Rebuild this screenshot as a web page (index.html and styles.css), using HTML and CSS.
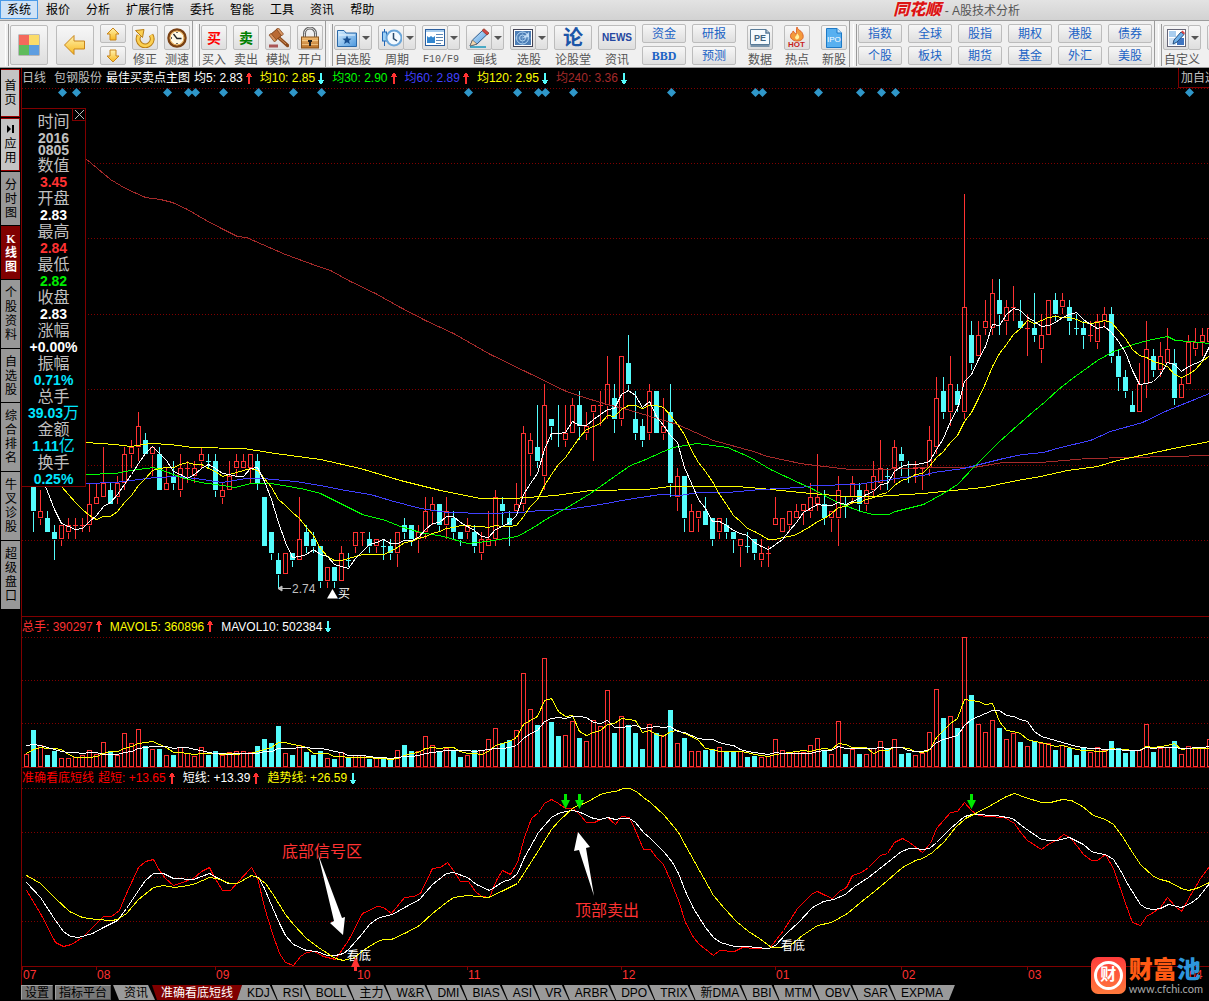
FILE: index.html
```html
<!DOCTYPE html>
<html lang="zh-CN">

<head>
    <meta charset="UTF-8">
    <meta name="viewport" content="width=device-width, initial-scale=1.0">
    <title>同花顺 - A股技术分析</title>
    <link rel="stylesheet" href="styles.css">
</head>

<body>
    <!-- shared shapes -->
    <svg class="defs" aria-hidden="true">
        <defs>
            <linearGradient id="gold" x1="0" y1="0" x2="0" y2="1">
                <stop offset="0" stop-color="#fff3b0"/>
                <stop offset="1" stop-color="#f7b71d"/>
            </linearGradient>
            <linearGradient id="sky" x1="0" y1="0" x2="1" y2="1">
                <stop offset="0" stop-color="#d8efff"/>
                <stop offset="1" stop-color="#4b97dd"/>
            </linearGradient>
            <linearGradient id="wood" x1="0" y1="0" x2="0" y2="1">
                <stop offset="0" stop-color="#f3bd72"/>
                <stop offset="1" stop-color="#b8712a"/>
            </linearGradient>
            <symbol id="up" viewBox="0 0 6 11"><path fill="#ff3232" d="M2 0H4V1H5V3H6V4H4V11H2V4H0V3H1V1H2z"/></symbol>
            <symbol id="down" viewBox="0 0 6 11"><path fill="#54fcfc" d="M2 11H4V10H5V8H6V7H4V0H2V7H0V8H1V10H2z"/></symbol>
        </defs>
    </svg>

    <header>
        <nav class="menu">
            <a class="menu-item active" href="#">系统</a>
            <a class="menu-item" href="#">报价</a>
            <a class="menu-item" href="#">分析</a>
            <a class="menu-item" href="#">扩展行情</a>
            <a class="menu-item" href="#">委托</a>
            <a class="menu-item" href="#">智能</a>
            <a class="menu-item" href="#">工具</a>
            <a class="menu-item" href="#">资讯</a>
            <a class="menu-item" href="#">帮助</a>
            <h1 class="title"><span class="brand">同花顺</span> - A股技术分析</h1>
        </nav>

        <div class="toolbar">
            <div class="group home">
                <button class="btn big" aria-label="主页">
                    <svg width="22" height="22" viewBox="0 0 22 22">
                        <rect x="0.5" y="0.5" width="21" height="21" fill="#888"/>
                        <rect x="1" y="1" width="10" height="10" fill="#f4695c"/>
                        <rect x="11" y="1" width="10" height="10" fill="#fbdc6a"/>
                        <rect x="1" y="11" width="10" height="10" fill="#5fbb5c"/>
                        <rect x="11" y="11" width="10" height="10" fill="#5d9de0"/>
                    </svg>
                </button>
                <button class="btn big back" aria-label="后退">
                    <svg width="24" height="22" viewBox="0 0 24 22"><path d="M1.500 11L11 1.500V7H21.500V15H11V20.500z" fill="url(#gold)" stroke="#c8841a"/></svg>
                </button>
                <div class="stack small">
                    <button class="btn" aria-label="上"><svg width="14" height="14" viewBox="0 0 14 14"><path d="M7 1L13 7H10V13H4V7H1z" fill="url(#gold)" stroke="#c8841a"/></svg></button>
                    <button class="btn" aria-label="下"><svg width="14" height="14" viewBox="0 0 14 14"><path d="M7 13L13 7H10V1H4V7H1z" fill="url(#gold)" stroke="#c8841a"/></svg></button>
                </div>
                <div class="tool">
                    <button class="btn" id="fix"><svg width="20" height="20" viewBox="0 0 20 20"><path d="M4 7.500A7 7 0 1 0 16 7" fill="none" stroke="#b87d16" stroke-width="5"/><path d="M4 7.500A7 7 0 1 0 16 7" fill="none" stroke="#fbd052" stroke-width="3"/><path d="M0.500 2.500L9 1.500L7.500 9.500z" fill="#fbd052" stroke="#b87d16"/></svg></button>
                    <label for="fix">修正</label>
                </div>
                <div class="tool">
                    <button class="btn" id="speed"><svg width="20" height="20" viewBox="0 0 20 20"><circle cx="10" cy="10" r="8.500" fill="#fff9e6" stroke="#7a4113" stroke-width="2.500"/><circle cx="10" cy="10" r="7" fill="none" stroke="#dd9a3c"/><path d="M6.500 6L10 10.500H14.500M10 4V5M10 15V16M4 10H5" fill="none" stroke="#222" stroke-width="1.300"/></svg></button>
                    <label for="speed">测速</label>
                </div>
            </div>

            <div class="group">
                <div class="tool"><button class="btn buy" id="buy">买</button><label for="buy">买入</label></div>
                <div class="tool"><button class="btn sell" id="sell">卖</button><label for="sell">卖出</label></div>
                <div class="tool">
                    <button class="btn" id="sim"><svg width="21" height="20" viewBox="0 0 21 20"><path d="M10 9L19.500 17.500" stroke="#8b4a1c" stroke-width="3.500" stroke-linecap="round"/><path d="M9 8L18 16" stroke="#d2915a" stroke-width="1"/><path d="M2 7L9 1L14 7L7 13z" fill="#b96a34" stroke="#7b3f18"/><path d="M1 7L3 5.500L8.500 12L6.500 14zM8.500 1L10.500 0L15.500 6L13.500 8z" fill="#d99662" stroke="#7b3f18" stroke-width="0.700"/><path d="M1 18H10" stroke="#a55" stroke-width="3"/></svg></button>
                    <label for="sim">模拟</label>
                </div>
                <div class="tool">
                    <button class="btn" id="open"><svg width="20" height="22" viewBox="0 0 20 22"><path d="M4.500 11V6.500A5.500 5.500 0 0 1 15.500 6.500V11" fill="none" stroke="#666" stroke-width="3"/><path d="M4.500 11V6.500A5.500 5.500 0 0 1 15.500 6.500V11" fill="none" stroke="#ddd"/><rect x="1.500" y="10" width="17" height="11" fill="url(#wood)" stroke="#8a551d"/><path d="M2 13.500H18M2 17.500H18" stroke="#ffe0a8" opacity=".6"/><path d="M8 13H12V15H11V19H9V15H8z" fill="#222"/></svg></button>
                    <label for="open">开户</label>
                </div>
            </div>

            <div class="group">
                <div class="tool">
                    <div class="split"><button class="btn" id="fav"><svg width="20" height="18" viewBox="0 0 20 18"><path d="M0.500 1.500H7L9 4H19.500V17.500H0.500z" fill="url(#sky)" stroke="#2b69a8"/><path d="M2 6H18" stroke="#eaf6ff"/><path d="M10 6.500L11.300 9.500L14.500 9.700L12 11.800L12.900 15L10 13.200L7.100 15L8 11.800L5.500 9.700L8.700 9.500z" fill="#174f91"/></svg></button><button class="btn arrow" aria-label="更多"></button></div>
                    <label for="fav">自选股</label>
                </div>
                <div class="tool">
                    <div class="split"><button class="btn" id="period"><svg width="21" height="20" viewBox="0 0 21 20"><path d="M3.500 1V18" stroke="#2267b5"/><rect x="1.500" y="4" width="4" height="9" fill="#9dd0f6" stroke="#2267b5"/><circle cx="13" cy="10" r="7.500" fill="#f3faff" stroke="#6aa6da" stroke-width="2"/><path d="M12.500 5V10.500L16 13" fill="none" stroke="#2a4b6d" stroke-width="1.500"/></svg></button><button class="btn arrow" aria-label="更多"></button></div>
                    <label for="period">周期</label>
                </div>
                <div class="tool">
                    <div class="split"><button class="btn" id="f10"><svg width="20" height="17" viewBox="0 0 20 17"><rect x="0.500" y="0.500" width="19" height="16" fill="#fff" stroke="#2c5f9e"/><rect x="1" y="1" width="18" height="2" fill="#a9cdee"/><path d="M2 7L4 8.500L6 7L8 8.500L10 7V14H2z" fill="#3286cf"/><path d="M11 5.500H18M11 8.500H18M11 11.500H18M11 14.500H16" stroke="#5c87b5"/></svg></button><button class="btn arrow" aria-label="更多"></button></div>
                    <label class="mono" for="f10">F10/F9</label>
                </div>
                <div class="tool">
                    <div class="split"><button class="btn" id="draw"><svg width="21" height="20" viewBox="0 0 21 20"><path d="M1 19H17" stroke="#1797bd" stroke-width="1.500"/><path d="M1 18L3.500 12L14 2L18.500 6L8 16z" fill="url(#sky)" stroke="#2f5c8e"/><path d="M13 2.500L15 0.800L20 5.200L18 7z" fill="#d64141" stroke="#943"/><path d="M1 18L3.500 12L8 16z" fill="#f4d8ae" stroke="#555" stroke-width=".6"/></svg></button><button class="btn arrow" aria-label="更多"></button></div>
                    <label for="draw">画线</label>
                </div>
                <div class="tool">
                    <div class="split"><button class="btn" id="pick"><svg width="20" height="18" viewBox="0 0 20 18"><rect x="0.500" y="0.500" width="19" height="17" fill="#fff" stroke="#445"/><rect x="2" y="2" width="16" height="14" fill="#4d7eb6"/><circle cx="9.500" cy="9" r="6" fill="none" stroke="#b8d8f4"/><circle cx="9.500" cy="9" r="3" fill="none" stroke="#b8d8f4"/><path d="M2 9H18M9.500 2V16" stroke="#86b1dc" stroke-width=".6"/><path d="M9.500 9L16 3V8z" fill="#d7ecff" opacity=".8"/></svg></button><button class="btn arrow" aria-label="更多"></button></div>
                    <label for="pick">选股</label>
                </div>
                <div class="tool"><button class="btn wide forum" id="forum">论</button><label for="forum">论股堂</label></div>
                <div class="tool"><button class="btn wide news" id="news">NEWS</button><label for="news">资讯</label></div>
                <div class="stack"><button class="btn">资金</button><button class="btn bbd">BBD</button></div>
                <div class="stack"><button class="btn">研报</button><button class="btn">预测</button></div>
                <div class="tool spaced">
                    <button class="btn" id="data"><svg width="22" height="20" viewBox="0 0 22 20"><path d="M1.500 1.500H17L20.500 5V16.500H1.500z" fill="#f5fafd" stroke="#587b98"/><path d="M17 1.500V5H20.500M1.500 18H20.500" fill="none" stroke="#587b98" stroke-width="1.500"/><text x="5" y="13" class="icon-pe">PE</text></svg></button>
                    <label for="data">数据</label>
                </div>
                <div class="tool spaced">
                    <button class="btn" id="hot"><svg width="20" height="22" viewBox="0 0 20 22"><path d="M10 0C11 4 15 3 16 8C17 12 14 14 10 14S2 11 4 7C5 5 6 6 6 4C8 5 7 7 9 7C10 5 9 3 10 0z" fill="#f39a3b" stroke="#df642c"/><path d="M10 6C11 8 13 9 12 11S8 13 8 10C9 9 10 8 10 6z" fill="#fff0a0"/><text x="1" y="20" class="icon-hot">HOT</text></svg></button>
                    <label for="hot">热点</label>
                </div>
                <div class="tool spaced">
                    <button class="btn" id="ipo"><svg width="16" height="20" viewBox="0 0 16 20"><path d="M0.500 0.500H11L15.500 5V19.500H0.500z" fill="#58b0f0" stroke="#1d79c6"/><path d="M11 0.500V5H15.500" fill="#c8e8ff" stroke="#1d79c6"/><text x="1" y="14" class="icon-ipo">IPO</text></svg></button>
                    <label for="ipo">新股</label>
                </div>
            </div>

            <div class="group">
                <div class="stack"><button class="btn">指数</button><button class="btn">个股</button></div>
                <div class="stack"><button class="btn">全球</button><button class="btn">板块</button></div>
                <div class="stack"><button class="btn">股指</button><button class="btn">期货</button></div>
                <div class="stack"><button class="btn">期权</button><button class="btn">基金</button></div>
                <div class="stack"><button class="btn">港股</button><button class="btn">外汇</button></div>
                <div class="stack"><button class="btn">债券</button><button class="btn">美股</button></div>
            </div>

            <div class="group">
                <div class="tool">
                    <div class="split"><button class="btn" id="custom"><svg width="19" height="18" viewBox="0 0 19 18"><rect x="0.500" y="0.500" width="18" height="17" fill="#fff" stroke="#667"/><rect x="2" y="2" width="7" height="6" fill="#a9cdee"/><rect x="2" y="9" width="7" height="7" fill="#cfe0f2"/><rect x="10" y="9" width="7" height="7" fill="#3e74c0"/><path d="M6 15L7 11L14 3L17 5.500L10 13z" fill="#6fb1ea" stroke="#27507e"/><path d="M14 3L15.500 1.500L18 4L17 5.500z" fill="#d64141"/></svg></button><button class="btn arrow" aria-label="更多"></button></div>
                    <label for="custom">自定义</label>
                </div>
                <div class="tool"><button class="btn" aria-label="多窗"></button></div>
            </div>
        </div>
    </header>

    <div class="workspace">
        <aside class="sidebar">
            <button class="side light two">首页</button>
            <button class="side light three"><svg width="8" height="8" viewBox="0 0 8 8"><path d="M0 0L4 4L0 8zM5 0H7V8H5z"/></svg>应用</button>
            <button class="side three">分时图</button>
            <button class="side three current">K线图</button>
            <button class="side four">个股资料</button>
            <button class="side three">自选股</button>
            <button class="side four">综合排名</button>
            <button class="side four">牛叉诊股</button>
            <button class="side four">超级盘口</button>
        </aside>

        <main class="charts">
            <section class="pane">
                <div class="legend">
                    <span class="silver">日线</span>
                    <span class="silver stock">包钢股份</span>
                    <span class="white name">最佳买卖点主图</span>
                    <span class="white val">均5: 2.83<svg class="mark"><use href="#up"/></svg></span>
                    <span class="yellow val">均10: 2.85<svg class="mark"><use href="#down"/></svg></span>
                    <span class="green val">均30: 2.90<svg class="mark"><use href="#up"/></svg></span>
                    <span class="blue val">均60: 2.89<svg class="mark"><use href="#up"/></svg></span>
                    <span class="yellow val">均120: 2.95<svg class="mark"><use href="#down"/></svg></span>
                    <span class="brown val">均240: 3.36<svg class="mark"><use href="#down"/></svg></span>
                    <button class="add">加自选</button>
                </div>
                <svg class="plot price" id="price"></svg>

                <div class="quote">
                    <button class="close" aria-label="关闭"><svg width="9" height="9" viewBox="0 0 9 9"><path d="M0 0L9 9M9 0L0 9" stroke="#c0c0c0"/></svg></button>
                    <dl>
                        <dt>时间</dt><dd class="silver date">2016<br>0805</dd>
                        <dt>数值</dt><dd class="red">3.45</dd>
                        <dt>开盘</dt><dd class="white">2.83</dd>
                        <dt>最高</dt><dd class="red">2.84</dd>
                        <dt>最低</dt><dd class="lime">2.82</dd>
                        <dt>收盘</dt><dd class="white">2.83</dd>
                        <dt>涨幅</dt><dd class="white">+0.00%</dd>
                        <dt>振幅</dt><dd class="cyan">0.71%</dd>
                        <dt>总手</dt><dd class="cyan">39.03<span class="unit">万</span></dd>
                        <dt>金额</dt><dd class="cyan">1.11<span class="unit">亿</span></dd>
                        <dt>换手</dt><dd class="cyan">0.25%</dd>
                    </dl>
                </div>
            </section>

            <section class="pane">
                <div class="legend ruled">
                    <span class="red val">总手: 390297<svg class="mark"><use href="#up"/></svg></span>
                    <span class="yellow val">MAVOL5: 360896<svg class="mark"><use href="#up"/></svg></span>
                    <span class="white val">MAVOL10: 502384<svg class="mark"><use href="#down"/></svg></span>
                </div>
                <svg class="plot volume" id="volume"></svg>
            </section>

            <section class="pane">
                <div class="legend">
                    <span class="signal">准确看底短线</span>
                    <span class="signal val">超短: +13.65<svg class="mark"><use href="#up"/></svg></span>
                    <span class="white val">短线: +13.39<svg class="mark"><use href="#up"/></svg></span>
                    <span class="yellow val">趋势线: +26.59<svg class="mark"><use href="#down"/></svg></span>
                </div>
                <svg class="plot trend" id="trend"></svg>
            </section>

            <nav class="tabs">
                <button class="tool-tab">设置</button>
                <button class="tool-tab">指标平台</button>
                <div class="tab-strip">
                    <button class="tab">资讯</button>
                    <button class="tab selected">准确看底短线</button>
                    <button class="tab after">KDJ</button>
                    <button class="tab">RSI</button>
                    <button class="tab">BOLL</button>
                    <button class="tab">主力</button>
                    <button class="tab">W&amp;R</button>
                    <button class="tab">DMI</button>
                    <button class="tab">BIAS</button>
                    <button class="tab">ASI</button>
                    <button class="tab">VR</button>
                    <button class="tab">ARBR</button>
                    <button class="tab">DPO</button>
                    <button class="tab">TRIX</button>
                    <button class="tab">新DMA</button>
                    <button class="tab">BBI</button>
                    <button class="tab">MTM</button>
                    <button class="tab">OBV</button>
                    <button class="tab">SAR</button>
                    <button class="tab last">EXPMA</button>
                </div>
            </nav>
        </main>
    </div>

    <div class="watermark">
        <div class="seal"><span>财</span></div>
        <div class="site">
            <div class="site-name">财富<span>池</span></div>
            <div class="site-url">www.cfchi.com</div>
        </div>
    </div>

    <script src="chart.js"></script>
</body>

</html>
```
FILE: styles.css
```css
* {
    box-sizing: border-box;
}

body {
    margin: 0;
    background-color: #000;
    font-family: "Liberation Sans", "Noto Sans CJK SC", sans-serif;
    font-size: 12px;
    line-height: 14px;
    overflow: hidden;
}

button {
    font-family: inherit;
    font-size: 12px;
    line-height: 14px;
    padding: 0;
    margin: 0;
    border: none;
    cursor: pointer;
}

.defs {
    position: absolute;
    width: 0;
    height: 0;
}

/* menu */
.menu {
    display: flex;
    height: 20px;
    background: linear-gradient(#e3e3e3, #d2d2d2);
}

.menu-item {
    height: 19px;
    padding: 0 8px;
    line-height: 20px;
    color: #000;
    text-decoration: none;
    white-space: nowrap;
}

.menu-item.active {
    padding: 0 6px;
    line-height: 18px;
    background-color: #cfe3f7;
    border: 1px solid #4a9be8;
}

.title {
    margin: 0 189px 0 auto;
    font-size: 12px;
    font-weight: normal;
    line-height: 20px;
    color: #555;
    white-space: nowrap;
}

.brand {
    font-size: 16px;
    font-weight: 900;
    font-style: italic;
    color: #dc1414;
    text-shadow: 0 0 2px #fff;
}

/* toolbar */
.toolbar {
    display: flex;
    height: 48px;
    border-top: 1px solid #9c9c9c;
    border-bottom: 1px solid #9c9c9c;
    background-color: #f0f0f0;
    overflow: hidden;
}

.group {
    display: flex;
    flex: none;
    gap: 6px;
    padding: 3px 2px 0 3px;
    border-right: 1px solid #9c9c9c;
}

.group.home {
    padding-left: 5px;
}

.group::before {
    content: "";
    width: 2px;
    height: 42px;
    margin-right: -5px;
    border-right: 1px solid #999;
    border-left: 1px solid #fff;
}

.group:last-child {
    border-right: none;
}

.btn {
    display: flex;
    align-items: center;
    justify-content: center;
    width: 26px;
    height: 25px;
    flex: none;
    border: 1px solid #bcbcbc;
    border-radius: 2px;
    background: linear-gradient(#f7f7f7, #dedede);
}

.btn.big {
    width: 38px;
    height: 40px;
    margin: 1px 2px 0 0;
}

.btn.back {
    margin-right: 0;
}

.btn.wide {
    width: 38px;
}

.tool {
    display: flex;
    flex-direction: column;
    align-items: center;
    flex: none;
    padding-top: 1px;
}

.tool label {
    padding-top: 3px;
    color: #555;
    white-space: nowrap;
}

.tool .mono {
    font-family: "Liberation Mono", monospace;
    font-size: 10px;
}

.tool.spaced {
    margin-left: 5px;
}

.split {
    display: flex;
}

.split .arrow {
    width: 13px;
    margin-left: -1px;
}

.arrow::after {
    content: "";
    border: 4px solid transparent;
    border-top: 4px solid #555;
    border-bottom: none;
}

.stack {
    display: flex;
    flex-direction: column;
    gap: 3px;
}

.stack .btn {
    width: 44px;
    height: 19px;
    color: #1b63c5;
}

.stack.small .btn {
    width: 26px;
}

.stack .bbd {
    font-family: "Liberation Serif", serif;
    font-weight: bold;
}

.buy,
.sell {
    font-size: 14px;
    font-weight: bold;
    color: #f00;
}

.sell {
    color: #008000;
}

.forum {
    font-size: 20px;
    font-weight: bold;
    color: #1b55a8;
}

.news {
    font-size: 10px;
    font-weight: bold;
    color: #2446a0;
}

.icon-pe {
    font-size: 9px;
    font-weight: bold;
    fill: #3f6482;
}

.icon-hot {
    font-size: 8px;
    font-weight: bold;
    fill: #c81e1e;
}

.icon-ipo {
    font-size: 8px;
    fill: #fff;
}

/* left side tabs */
.workspace {
    display: flex;
}

.sidebar {
    display: flex;
    flex-direction: column;
    flex: none;
    width: 21px;
    padding: 1px 1px 0 1px;
    gap: 1px;
}

.side {
    display: flex;
    flex-wrap: wrap;
    align-content: center;
    justify-content: center;
    padding: 0 3px 0 4px;
    background-color: #989898;
    color: #000;
    word-break: break-all;
}

.side svg {
    margin-bottom: 4px;
}

.side.light {
    background-color: #c4c4c4;
    border: 1px solid #900;
    border-left: none;
}

.side.current {
    background-color: #800000;
    color: #fff;
    font-family: "Liberation Serif", "Noto Sans CJK SC", serif;
    font-weight: bold;
}

.two {
    height: 48px;
}

.three {
    height: 53px;
}

.four {
    height: 68px;
}

/* chart panes */
.charts {
    flex: 1;
    min-width: 0;
}

.pane {
    position: relative;
    border-left: 1px solid #800000;
}

.legend {
    display: flex;
    align-items: center;
    height: 20px;
    white-space: nowrap;
}

.legend.ruled {
    border-top: 1px solid #800000;
}

.stock {
    margin: 0 4px 0 8px;
}

.name {
    margin-right: 4px;
}

.val {
    display: flex;
    align-items: center;
    margin-right: 8px;
}

.mark {
    width: 6px;
    height: 11px;
    margin-left: 3px;
    shape-rendering: crispEdges;
}

.add {
    align-self: stretch;
    width: 31px;
    margin-left: auto;
    padding-left: 2px;
    overflow: hidden;
    background: #000;
    color: #c0c0c0;
    text-align: left;
    border-left: 1px solid #800000;
    border-bottom: 1px solid #800000;
}

.plot {
    display: block;
    width: 100%;
    overflow: hidden;
}

.price {
    height: 528px;
}

.volume {
    height: 132px;
}

.trend {
    height: 197px;
}

.silver {
    color: #c0c0c0;
}

.white {
    color: #fff;
}

.yellow {
    color: #ff0;
}

.green {
    color: #0f0;
}

.lime {
    color: #0e0;
}

.blue {
    color: #4040ff;
}

.brown {
    color: #a52a2a;
}

.red {
    color: #ff3232;
}

.cyan {
    color: #00e6ff;
}

.signal {
    color: #f00;
    margin-right: 4px;
}

.signal.val {
    margin-right: 8px;
}

/* floating quote window */
.quote {
    position: absolute;
    top: 40px;
    left: -1px;
    width: 65px;
    height: 379px;
    background-color: #000;
    border: 1px solid #800000;
}

.close {
    position: absolute;
    top: 0;
    right: 0;
    display: flex;
    align-items: center;
    justify-content: center;
    width: 13px;
    height: 12px;
    background: #000;
    border: 1px solid #800000;
    border-top: none;
    border-right: none;
}

.quote dl {
    margin: 5px 0 0;
    text-align: center;
}

.quote dt {
    font-size: 16px;
    line-height: 16px;
    color: #c0c0c0;
}

.quote dd {
    margin: 0;
    font-size: 14px;
    font-weight: bold;
    line-height: 17px;
    white-space: nowrap;
}

.quote .date {
    line-height: 12px;
    padding: 2px 0;
}

.unit {
    font-size: 16px;
    font-weight: normal;
    line-height: 16px;
}

/* plots */
.grid {
    stroke: #800000;
    stroke-dasharray: 1 2;
    shape-rendering: crispEdges;
}

.axis {
    stroke: #800000;
    shape-rendering: crispEdges;
}

.rise {
    fill: none;
    stroke: #ff3232;
    shape-rendering: crispEdges;
}

.fall {
    fill: #54fcfc;
    stroke: #54fcfc;
    shape-rendering: crispEdges;
}

.line {
    fill: none;
    stroke-width: 1;
    shape-rendering: crispEdges;
}

.diamond {
    fill: #2f97c9;
}

.note {
    font-size: 16px;
    fill: #ff3232;
}

.month {
    fill: #ff3232;
}

.tip {
    fill: #fff;
}

.low {
    fill: #c0c0c0;
}

/* indicator tabs */
.tabs {
    display: flex;
    height: 16px;
}

.tool-tab {
    height: 15px;
    margin-right: 2px;
    padding: 0 3px;
    background-color: #787878;
    border: 1px solid #a0a0a0;
    border-right-color: #555;
    border-bottom-color: #555;
}

.tab-strip {
    display: flex;
}

.tab {
    flex: none;
    height: 15px;
    margin-right: -5px;
    padding: 0 7px 0 11px;
    background-color: #9a9a9a;
    color: #000;
    white-space: nowrap;
    clip-path: polygon(0 0, calc(100% - 7px) 0, 100% 100%, 6px 100%);
}

.tab.selected {
    margin-left: 2px;
    padding: 0 9px;
    background-color: #800000;
    color: #fff;
    clip-path: polygon(0 0, 100% 0, calc(100% - 5px) 100%, 5px 100%);
}

.tab.after {
    padding-left: 10px;
    clip-path: polygon(5px 0, calc(100% - 7px) 0, 100% 100%, 0 100%);
}

.tab.last {
    padding-right: 12px;
    clip-path: polygon(0 0, 100% 0, calc(100% - 6px) 100%, 6px 100%);
}

/* site mark over the lower right corner */
.watermark {
    position: absolute;
    right: 6px;
    bottom: 6px;
    display: flex;
    gap: 3px;
}

.seal {
    display: flex;
    align-items: center;
    justify-content: center;
    width: 35px;
    height: 37px;
    border-radius: 7px;
    background: linear-gradient(#ff3c3c, #ff7a3c);
}

.seal span {
    width: 29px;
    height: 29px;
    border: 3px solid #fff;
    border-radius: 50%;
    color: #fff;
    font-size: 16px;
    font-weight: bold;
    line-height: 22px;
    text-align: center;
}

.site-name {
    font-size: 24px;
    font-weight: 900;
    line-height: 25px;
    color: #ff5a14;
}

.site-name span {
    color: #2d96dc;
}

.site-url {
    font-family: Lato, sans-serif;
    font-size: 11px;
    line-height: 13px;
    color: #aaa;
}
```
FILE: chart.js
```js
var SVG = "http://www.w3.org/2000/svg";
var LEFT = 22;      // screen x of the plots
var FIRST = 26;     // x of the first bar
var STEP = 7;       // bar pitch

// open, high, low, close in cents above 2.74
var candles = [
    [18,20,17,19],[18,20,8,11],[10,14,9,11],[10,11,8,8],[8,9,4,7],[7,9,6,9],[8,10,7,9],[9,10,7,9],[9,10,8,9],[9,15,8,12],
    [12,15,12,13],[13,20,13,15],[14,15,12,12],[13,16,12,15],[15,20,14,19],[19,21,17,20],[20,25,18,23],[21,22,19,19],[19,20,16,20],[19,20,14,14],
    [14,17,14,15],[16,18,14,15],[14,19,13,17],[17,18,15,17],[16,18,15,17],[18,20,17,19],[18,19,17,18],[18,19,13,14],[13,15,12,14],[14,18,14,16],
    [17,19,16,18],[17,19,17,18],[17,19,15,19],[18,19,14,15],[13,13,6,6],[8,8,4,5],[4,5,0,2],[2,5,2,5],[5,5,3,4],[4,13,4,7],
    [8,9,5,6],[7,8,5,6],[6,6,0,1],[1,3,0,3],[3,3,0,1],[1,6,1,5],[4,5,3,4],[6,8,5,8],[8,8,6,8],[7,8,5,6],
    [6,7,5,7],[6,7,4,6],[6,7,4,5],[5,8,3,8],[9,10,7,8],[9,9,6,7],[7,9,5,8],[8,13,7,11],[11,13,9,12],[12,12,8,9],
    [9,13,7,11],[10,11,7,8],[8,8,6,7],[8,10,7,9],[8,9,5,6],[5,8,4,7],[6,11,6,7],[7,14,6,13],[12,13,9,11],[10,11,6,9],
    [11,15,11,12],[12,23,11,22],[19,22,16,21],[20,26,17,18],[16,29,14,26],[24,24,21,23],[22,26,20,22],[21,26,20,22],[22,27,22,26],[26,28,21,23],
    [22,25,21,23],[25,26,18,26],[26,28,23,26],[26,33,24,29],[27,29,22,24],[24,33,23,33],[32,36,28,29],[24,28,21,22],[23,24,20,21],[22,29,21,28],
    [28,28,22,22],[22,27,21,23],[25,29,13,15],[13,17,11,16],[16,16,8,10],[8,12,8,11],[10,11,8,11],[11,13,9,9],[10,10,6,7],[8,10,7,10],
    [9,10,7,8],[8,8,5,7],[6,7,3,7],[6,8,5,6],[7,7,4,5],[4,7,3,5],[5,6,3,5],[9,13,9,10],[8,10,8,10],[9,11,8,11],
    [10,12,10,11],[11,12,9,12],[11,15,10,13],[12,19,11,13],[12,14,9,10],[10,11,8,11],[10,16,6,14],[12,13,10,12],[13,16,12,15],[14,15,11,12],
    [12,15,11,14],[14,18,13,16],[15,21,14,17],[16,17,14,16],[17,21,15,20],[19,20,16,18],[17,18,15,17],[17,18,15,17],[17,17,14,17],[17,23,16,21],
    [20,30,19,27],[28,30,24,25],[25,33,23,29],[28,29,25,26],[25,56,24,40],[36,38,31,32],[33,38,33,36],[37,41,36,38],[37,44,36,42],[41,44,36,39],
    [38,41,36,40],[40,43,38,40],[38,41,37,37],[37,39,33,37],[37,42,35,36],[34,39,32,36],[36,41,36,41],[41,42,38,39],[40,42,39,41],[40,41,36,38],
    [37,39,36,37],[37,38,34,36],[36,38,35,36],[35,39,34,38],[38,40,37,39],[39,40,32,33],[33,34,28,30],[30,31,27,28],[26,28,25,25],[25,32,25,29],
    [29,38,27,34],[33,34,30,31],[31,35,30,33],[32,37,32,34],[32,34,26,27],[27,30,27,29],[29,36,29,35],[34,37,33,35],[35,37,33,36],[35,37,35,37]
];

var volumes = [
    12,36,21,11,15,8,8,9,11,16,12,24,15,11,33,23,37,20,17,17,11,11,19,13,10,19,11,15,11,14,
    15,15,14,20,27,23,40,13,11,21,14,11,15,8,7,14,8,11,11,7,8,8,8,16,21,15,15,30,21,15,
    18,15,9,11,16,16,27,38,23,26,36,93,57,41,108,44,30,31,45,28,25,46,40,76,33,50,41,33,17,42,
    33,31,56,23,28,15,15,16,17,19,15,15,15,9,10,9,10,27,16,14,15,14,21,28,16,12,45,12,17,12,
    12,18,25,18,27,12,13,11,13,34,77,48,50,38,129,71,42,34,46,38,27,33,24,20,25,23,23,16,21,18,
    11,19,14,19,16,25,18,13,15,16,42,14,18,19,25,12,20,19,19,27
];

// values before the first bar, for the averages
var closeHistory = [20, 20, 20, 20, 20, 20, 20, 20, 20];
var volumeHistory = [30, 30, 30, 30, 30, 15, 14, 15, 14];

var ma30 = "85,474 115,473 130,470 153,467 165,471 181,477 200,482 215,484 235,487 250,483 270,483 283,485 305,489 320,493 340,503 362,514 385,520 400,526 420,532 443,536 467,543 487,541 517,536 533,527 547,518 567,507 590,493 607,481 617,474 630,465 643,460 663,451 673,447 697,443 727,447 750,457 770,469 800,483 813,489 837,502 860,511 873,514 888,514 895,511 923,504 943,493 957,484 973,467 998,442 1017,425 1033,411 1045,401 1058,389 1072,378 1097,360 1113,351 1133,344 1147,340 1167,336 1175,340 1190,341 1209,343";
var ma60 = "85,483 115,482 155,477 178,476 195,478 222,482 245,478 262,478 295,481 320,485 345,490 370,494 390,500 420,508 447,512 487,513 520,512 540,510 567,509 600,504 627,499 660,494 680,495 697,492 727,492 760,489 800,487 813,485 857,484 883,480 903,477 923,475 933,472 963,468 1003,458 1022,454 1043,452 1060,447 1090,440 1110,431 1142,422 1167,410 1209,393";
var ma120 = "85,442 115,444 130,446 150,443 170,444 192,447 243,448 275,453 320,459 360,468 400,480 440,490 480,498 513,498 540,496 555,495 590,490 645,489 670,486 737,486 760,488 800,492 845,496 875,496 923,493 943,491 983,487 1017,480 1040,476 1067,470 1097,466 1117,460 1145,454 1173,448 1209,441";
var ma240 = "85,158 97,168 110,179 125,188 145,197 160,199 172,202 187,209 204,219 221,228 237,236 246,237 262,244 285,254 315,265 330,270 350,281 375,293 400,307 425,320 453,333 490,354 527,372 566,391 587,398 607,404 627,409 650,416 677,424 713,440 753,451 767,456 800,463 815,465 850,469 880,469 923,467 973,467 1003,462 1040,462 1087,458 1130,457 1209,455";

var fastLine = "26,890 40,913 55,942 63,946 71,944 82,937 92,927 103,916 111,916 119,910 126,893 138,867 145,861 153,859 159,870 165,878 173,885 182,882 193,878 201,871 209,867 214,877 222,890 230,890 237,882 251,867 257,877 264,907 272,933 279,953 285,962 293,965 300,956 306,952 314,951 323,956 335,959 348,940 362,913 377,906 383,907 391,913 404,897 413,896 420,893 432,868 440,867 447,862 453,870 460,881 468,881 475,891 481,896 489,897 496,880 502,870 510,874 517,862 524,837 531,818 538,812 544,803 551,799 558,803 565,808 573,808 580,815 586,822 594,822 600,819 607,817 615,824 621,816 629,817 635,830 643,849 650,849 656,857 663,864 670,880 678,900 685,922 693,937 699,944 713,955 719,950 734,951 742,947 755,948 769,948 783,930 797,908 812,893 817,891 825,895 832,898 839,891 846,887 852,875 861,872 868,867 880,855 887,853 894,842 902,838 909,842 922,852 930,843 936,828 950,812 957,811 964,802 972,811 979,815 986,816 1004,817 1014,823 1021,833 1027,840 1041,849 1049,843 1056,840 1063,834 1070,837 1083,854 1091,860 1097,860 1105,854 1113,868 1124,900 1132,922 1140,925 1146,916 1153,912 1160,907 1167,897 1175,906 1181,911 1190,895 1200,878 1209,866";
var shortLine = "26,882 40,897 55,920 63,931 70,936 78,937 92,933 103,927 117,920 126,908 138,890 145,880 153,873 163,873 173,878 193,879 209,873 216,877 228,883 237,883 251,875 258,877 264,888 272,907 279,923 285,935 293,944 306,950 316,951 327,955 335,955 343,953 348,949 362,933 369,924 377,918 383,916 392,914 406,906 419,899 432,884 446,873 453,872 467,877 476,884 489,890 503,881 510,879 517,873 524,857 538,832 551,817 558,813 565,811 573,810 580,812 593,818 600,819 607,817 615,819 621,818 629,818 635,822 643,832 650,838 664,852 672,862 678,873 685,891 693,908 705,927 713,937 720,942 734,946 748,946 755,947 768,948 775,945 786,933 798,922 812,907 823,901 833,899 845,894 854,886 868,877 882,866 887,862 901,851 909,848 915,848 922,849 929,848 936,842 950,828 964,816 972,814 996,815 1012,818 1025,828 1041,839 1049,840 1056,840 1069,837 1083,844 1091,851 1098,853 1105,854 1113,859 1120,870 1128,885 1140,904 1146,908 1153,909 1160,908 1168,904 1181,907 1190,903 1198,897 1209,883";
var trendLine = "26,875 40,883 55,898 69,911 82,917 96,919 111,920 117,919 126,913 138,899 153,887 163,885 174,887 188,885 195,883 209,877 216,878 230,883 237,883 251,875 257,877 265,883 272,893 285,914 293,924 306,938 318,947 335,958 343,960 354,957 364,949 377,941 383,939 391,939 406,932 419,925 432,913 446,902 453,897 467,895 488,897 501,891 517,883 524,872 538,850 551,829 558,821 573,807 586,802 593,798 600,794 607,792 615,791 623,788 629,788 636,791 643,797 650,802 664,815 678,832 685,845 699,870 713,895 724,908 736,921 748,931 759,938 771,947 779,947 790,945 802,935 817,925 831,922 847,913 860,902 874,891 887,880 902,867 915,860 922,858 932,852 944,841 955,827 965,818 975,813 992,804 1006,796 1014,793 1025,797 1041,802 1050,802 1062,799 1071,800 1082,806 1093,815 1105,819 1113,824 1122,836 1132,852 1140,864 1153,876 1160,879 1168,881 1181,888 1188,890 1196,888 1209,882";

var diamonds = [62,76,167,188,195,223,258,293,321,468,517,538,545,573,671,755,762,818,860,881,895,1189];
var months = [["07",22],["08",96],["09",215],["10",356],["11",467],["12",621],["01",775],["02",901],["03",1027],["04",1188]];

function add(parent, tag, attrs, text) {
    var el = document.createElementNS(SVG, tag);
    for (var key in attrs) {
        el.setAttribute(key, attrs[key]);
    }
    if (text) {
        el.textContent = text;
    }
    parent.appendChild(el);
    return el;
}

// group that shifts screen coordinates into the plot
function layer(id, top) {
    return add(document.getElementById(id), "g", { transform: "translate(" + -LEFT + "," + -top + ")" });
}

function gridLine(g, y, cls) {
    add(g, "line", { x1: LEFT, x2: 4000, y1: y + 0.5, y2: y + 0.5, "class": cls || "grid" });
}

function polyline(g, points, color) {
    add(g, "polyline", { points: points, stroke: color, "class": "line", transform: "translate(0.5,0.5)" });
}

function barX(i) {
    return FIRST + i * STEP + 0.5;
}

function priceY(n) {
    return 588 - Math.round(n * 7.03);
}

function isFall(i) {
    var c = candles[i];
    if (c[3] == c[0]) {
        return i > 0 && c[3] < candles[i - 1][3];
    }
    return c[3] < c[0];
}

function average(values, history, n, toY) {
    var all = history.concat(values);
    var points = [];
    for (var i = 0; i < values.length; i++) {
        var sum = 0;
        for (var k = 0; k < n; k++) {
            sum += all[i + history.length - k];
        }
        points.push((FIRST + i * STEP) + "," + Math.round(toY(sum / n)));
    }
    return points.join(" ");
}

function drawPrice() {
    var g = layer("price", 88);
    [88, 163, 238, 314, 389, 465, 540].forEach(function (y) { gridLine(g, y); });

    candles.forEach(function (c, i) {
        var x = barX(i);
        var cls = isFall(i) ? "fall" : "rise";
        var top = priceY(Math.max(c[0], c[3])) + 0.5;
        var bottom = priceY(Math.min(c[0], c[3])) + 0.5;
        var high = priceY(c[1]);
        var low = priceY(c[2]);
        if (high < top - 1) {
            add(g, "line", { x1: x, x2: x, y1: high, y2: top, "class": cls });
        }
        if (low > bottom) {
            add(g, "line", { x1: x, x2: x, y1: bottom, y2: low, "class": cls });
        }
        if (top == bottom) {
            add(g, "line", { x1: x - 2.5, x2: x + 2.5, y1: top, y2: top, "class": cls });
        } else {
            add(g, "rect", { x: x - 2, y: top, width: 4, height: bottom - top - 1, "class": cls });
        }
    });

    var closes = candles.map(function (c) { return c[3]; });
    var toY = function (n) { return 588 - n * 7.03; };
    polyline(g, ma240, "#a52a2a");
    polyline(g, ma120, "#ffff00");
    polyline(g, ma60, "#4040ff");
    polyline(g, ma30, "#00ff00");
    polyline(g, average(closes, closeHistory, 10, toY), "#ffff00");
    polyline(g, average(closes, closeHistory, 5, toY), "#ffffff");

    diamonds.forEach(function (x) {
        add(g, "path", { d: "M" + (x + 0.5) + " 88l4.500 4.500l-4.500 4.500l-4.500-4.500z", "class": "diamond" });
    });

    add(g, "path", { d: "M278 588.500H291M278 588.500l4-2.500v5z", stroke: "#c0c0c0", fill: "#c0c0c0" });
    add(g, "text", { x: 292, y: 593, "class": "low" }, "2.74");
    add(g, "path", { d: "M332.500 589L338 598.500H327z", "class": "tip" });
    add(g, "text", { x: 338, y: 598, "class": "tip" }, "买");
}

function drawVolume() {
    var g = layer("volume", 636);
    [637, 680, 723].forEach(function (y) { gridLine(g, y); });
    volumes.forEach(function (v, i) {
        add(g, "rect", { x: barX(i) - 2, y: 766.5 - v, width: 4, height: v, "class": isFall(i) ? "fall" : "rise" });
    });
    gridLine(g, 767, "axis");
    var toY = function (v) { return 767 - v; };
    polyline(g, average(volumes, volumeHistory, 5, toY), "#ffff00");
    polyline(g, average(volumes, volumeHistory, 10, toY), "#ffffff");
}

function drawTrend() {
    var g = layer("trend", 788);
    [788, 832, 877, 921].forEach(function (y) { gridLine(g, y); });
    gridLine(g, 966, "axis");
    months.forEach(function (m) {
        add(g, "line", { x1: m[1] + 0.5, x2: m[1] + 0.5, y1: 966, y2: 970, "class": "axis" });
        add(g, "text", { x: m[1] + 1, y: 979, "class": "month" }, m[0]);
    });
    polyline(g, fastLine, "#ff0000");
    polyline(g, shortLine, "#ffffff");
    polyline(g, trendLine, "#ffff00");

    [565, 579, 971].forEach(function (x) {
        add(g, "path", { d: "M" + (x - 1) + " 794h3v6h3l-4.500 9l-4.500-9h3z", fill: "#00e600" });
    });
    add(g, "text", { x: 347, y: 960, "class": "tip" }, "看底");
    add(g, "text", { x: 781, y: 950, "class": "tip" }, "看底");
    add(g, "path", { d: "M355.500 957l4.500 10h-3v4h-3v-4h-3z", fill: "#ff3232" });

    add(g, "text", { x: 282, y: 857, "class": "note" }, "底部信号区");
    add(g, "text", { x: 575, y: 916, "class": "note" }, "顶部卖出");
    add(g, "path", { d: "M318 854L342 918L345 917L343 935L330 923L334 921z", "class": "tip" });
    add(g, "path", { d: "M578 832L590 847L586 848L594 896L579 850L574 851z", "class": "tip" });
}

drawPrice();
drawVolume();
drawTrend();
```
